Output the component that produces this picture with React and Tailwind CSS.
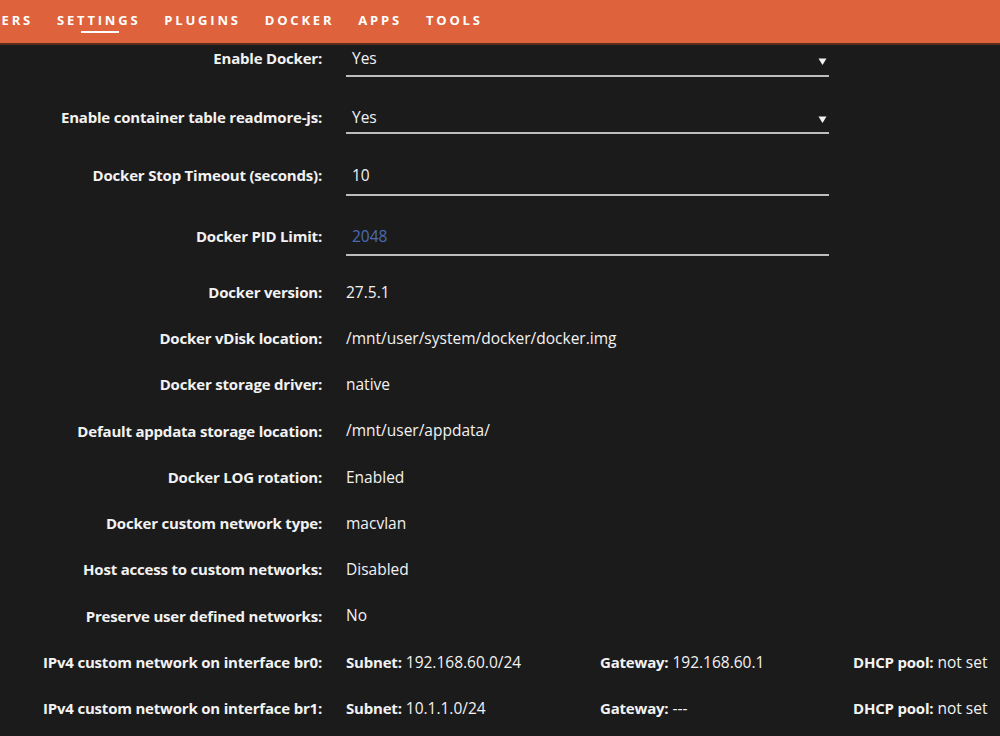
import React from 'react';

const navItems = ['USERS', 'SETTINGS', 'PLUGINS', 'DOCKER', 'APPS', 'TOOLS'];

const infoRows = [
    ['Docker version:', '27.5.1'],
    ['Docker vDisk location:', '/mnt/user/system/docker/docker.img'],
    ['Docker storage driver:', 'native'],
    ['Default appdata storage location:', '/mnt/user/appdata/'],
    ['Docker LOG rotation:', 'Enabled'],
    ['Docker custom network type:', 'macvlan'],
    ['Host access to custom networks:', 'Disabled'],
    ['Preserve user defined networks:', 'No'],
];

const networks = [
    { iface: 'br0', subnet: '192.168.60.0/24', gateway: '192.168.60.1', dhcp: 'not set' },
    { iface: 'br1', subnet: '10.1.1.0/24', gateway: '---', dhcp: 'not set' },
];

const Caret = () => (
    <svg width="9" height="9" viewBox="0 0 9 9" className="mr-[2px] self-center">
        <path d="M0.5 1.5 H8.5 L4.5 8 Z" fill="#f2f2f2" />
    </svg>
);

// label + underlined input; baseline keeps the label level with the value
const Field = ({ label, value, select, placeholder, box, gapTop }) => (
    <div className={`flex items-baseline ${gapTop}`}>
        <div className="w-[322px] shrink-0 text-right font-bold text-[15px] tracking-[-0.2px]">{label}</div>
        <div className={`ml-6 w-[483px] ${box} border-b-2 border-[#bdbdbd] flex items-baseline justify-between pl-[6px]`}>
            <span className={placeholder ? 'text-[#4a6bb5]' : ''}>{value}</span>
            {select && <Caret />}
        </div>
    </div>
);

const InfoRow = ({ label, children }) => (
    <div className="flex items-center h-[46.25px]">
        <div className="w-[322px] shrink-0 text-right font-bold text-[15px] tracking-[-0.2px]">{label}</div>
        <div className="ml-6 flex-1 flex">{children}</div>
    </div>
);

export default function App() {
    return (
        <div className="w-[1000px] h-[736px] overflow-hidden bg-[#1c1b1c] text-[#f2f2f2] text-[15.5px] font-['Open_Sans',Arial,sans-serif]">
            {/* Top nav */}
            <div className="h-[45px] bg-[#de633c] border-b-2 border-[#5e2c1c] overflow-hidden">
                <div className="flex items-center h-full -ml-[21px] gap-[24px] pb-[1px]">
                    {navItems.map((item) => (
                        <div key={item} className="relative font-bold text-[13px] tracking-[2.8px] text-white">
                            {item}
                            {item === 'SETTINGS' && (
                                <span className="absolute left-[24px] top-[20px] w-[38px] h-[2px] bg-white" />
                            )}
                        </div>
                    ))}
                </div>
            </div>

            {/* Settings form */}
            <Field label="Enable Docker:" value="Yes" select box="h-[32px] pt-[2px]" gapTop="mt-0" />
            <Field label="Enable container table readmore-js:" value="Yes" select box="h-[32px] pt-[4px]" gapTop="mt-[25px]" />
            <Field label="Docker Stop Timeout (seconds):" value="10" box="h-[36px] pt-[4px]" gapTop="mt-[26px]" />
            <Field label="Docker PID Limit:" value="2048" placeholder box="h-[36px] pt-[5px]" gapTop="mt-[24px]" />

            <div className="mt-[13px]">
                {infoRows.map(([label, value]) => (
                    <InfoRow key={label} label={label}>
                        {value}
                    </InfoRow>
                ))}
                {networks.map((n) => (
                    <InfoRow key={n.iface} label={`IPv4 custom network on interface ${n.iface}:`}>
                        <div className="w-[254px]"><span className="font-bold text-[15px] tracking-[-0.2px]">Subnet:</span> {n.subnet}</div>
                        <div className="w-[253px]"><span className="font-bold text-[15px] tracking-[-0.2px]">Gateway:</span> {n.gateway}</div>
                        <div className="whitespace-nowrap"><span className="font-bold text-[15px] tracking-[-0.2px]">DHCP pool:</span> {n.dhcp}</div>
                    </InfoRow>
                ))}
            </div>
        </div>
    );
}
